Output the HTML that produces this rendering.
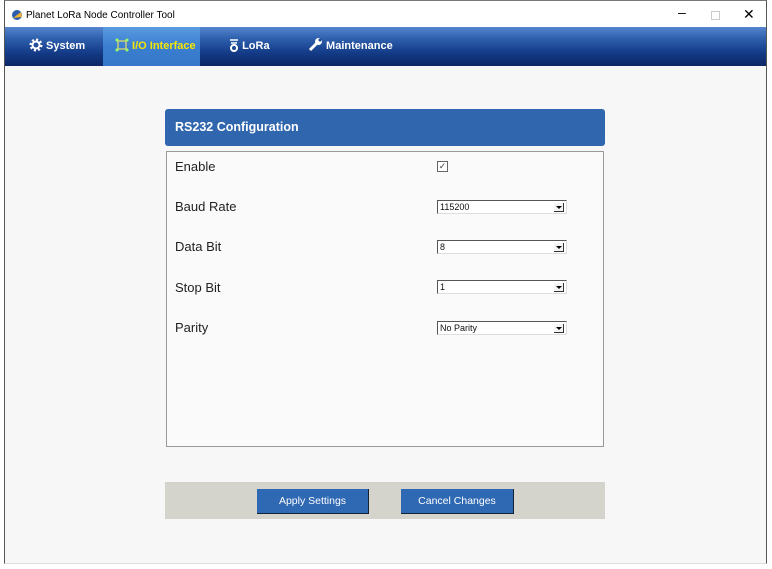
<!DOCTYPE html>
<html><head><style>
body{margin:0;width:772px;height:569px;background:#fff;position:relative;font-family:"Liberation Sans",sans-serif;overflow:hidden}
.win{position:absolute;left:4px;top:0;width:761px;height:562px;border-left:1px solid #555;border-right:1px solid #555;border-top:1px solid #777;border-bottom:1px solid #ddd;background:#f7f7f7}
.title{position:absolute;left:0;top:0;width:761px;height:26px;background:#fff;font-size:11px;color:#000}
.nav{position:absolute;left:0;top:26px;width:761px;height:39px;background:linear-gradient(#5585cc 0%,#2e5fad 30%,#143c88 65%,#0d2766 100%)}
.tab{position:absolute;top:0;height:39px;line-height:39px;color:#fff;font-weight:bold;font-size:11px}
.active{background:linear-gradient(#5a9ae0,#3b7fd0 50%,#3677c8);color:#f5e600}
.abs{position:absolute}
.lbl{position:absolute;left:175px;font-size:13px;color:#222}
.sel{position:absolute;left:437px;width:126px;height:12px;border:1px solid #555;border-right-color:#ddd;border-bottom-color:#ddd;background:#fff;font-size:9px;line-height:12px;color:#111;padding-left:2px;box-sizing:content-box}
.sel:after{content:"";position:absolute;right:2px;top:2px;width:9px;height:8px;border-bottom:1px solid #333;border-right:1px solid #333;background:#f4f4f4}
.sel i{position:absolute;right:4px;top:5px;border-left:3px solid transparent;border-right:3px solid transparent;border-top:3px solid #000;z-index:2}
.btn{position:absolute;top:489px;height:25px;background:#2f68b3;color:#fff;font-size:10.5px;text-align:center;line-height:25px;border-right:1px solid #123;border-bottom:1px solid #123;box-sizing:border-box}
</style></head><body>
<div class="win">
<div class="title">
<svg class="abs" style="left:6px;top:8px" width="12" height="12"><circle cx="6" cy="6" r="5" fill="#2b5fae"/><path d="M2 9 L10 3 L11 8 Z" fill="#f0b030"/></svg>
<span class="abs" style="left:21px;top:9px;font-size:10px">Planet LoRa Node Controller Tool</span>
<span class="abs" style="left:673px;top:3px;font-size:14px">–</span>
<span class="abs" style="left:706px;top:10px;width:7px;height:7px;border:1px solid #ccc"></span>
<span class="abs" style="left:738px;top:5px;font-size:14px">✕</span>
</div>
<div class="nav">
<div class="tab" style="left:24px">
<svg style="vertical-align:-3px" width="14" height="14" viewBox="0 0 14 14"><circle cx="7" cy="7" r="5" fill="none" stroke="#fff" stroke-width="3" stroke-dasharray="2 1.9"/><circle cx="7" cy="7" r="3.5" fill="none" stroke="#fff" stroke-width="2"/></svg> System</div>
<div class="tab active" style="left:98px;width:97px;text-indent:12px">
<svg style="vertical-align:-3px" width="14" height="14"><rect x="3" y="3" width="8" height="8" fill="none" stroke="#e8e060" stroke-width="1.2"/><circle cx="2" cy="2" r="1.5" fill="#9f6"/><circle cx="12" cy="2" r="1.5" fill="#9f6"/><circle cx="2" cy="12" r="1.5" fill="#9f6"/><circle cx="12" cy="12" r="1.5" fill="#9f6"/></svg> I/O Interface</div>
<div class="tab" style="left:224px;font-weight:normal;font-size:11px"><svg style="vertical-align:-3px" width="10" height="14"><path d="M1 2 H9 M2 5 H8" stroke="#fff" stroke-width="1.5"/><circle cx="5" cy="10" r="3" fill="none" stroke="#fff" stroke-width="2"/></svg> <b>LoRa</b></div>
<div class="tab" style="left:303px"><svg style="vertical-align:-3px" width="15" height="15"><path d="M2 13 L9 6" stroke="#fff" stroke-width="3"/><circle cx="10.5" cy="4.5" r="3.5" fill="#fff"/><circle cx="12" cy="3" r="1.5" fill="#1a4590"/></svg> Maintenance</div>
</div>
</div>
<div class="abs" style="left:165px;top:109px;width:440px;height:37px;background:#2f66ae;border-radius:3px;color:#fff;font-weight:bold;font-size:12.5px;line-height:37px;text-indent:10px">RS232 Configuration</div>
<div class="abs" style="left:166px;top:151px;width:436px;height:294px;border:1px solid #999;background:#fafafa"></div>
<div class="lbl" style="top:159px">Enable</div>
<div class="abs" style="left:437px;top:161px;width:9px;height:9px;border:1px solid #666;background:#fff;font-size:9px;line-height:9px;color:#444;text-align:center">✓</div>
<div class="lbl" style="top:199px">Baud Rate</div>
<div class="sel" style="top:200px">115200<i></i></div>
<div class="lbl" style="top:239px">Data Bit</div>
<div class="sel" style="top:240px">8<i></i></div>
<div class="lbl" style="top:280px">Stop Bit</div>
<div class="sel" style="top:280px">1<i></i></div>
<div class="lbl" style="top:320px">Parity</div>
<div class="sel" style="top:321px">No Parity<i></i></div>
<div class="abs" style="left:165px;top:482px;width:440px;height:37px;background:#d4d4cc"></div>
<div class="btn" style="left:257px;width:112px">Apply Settings</div>
<div class="btn" style="left:401px;width:113px">Cancel Changes</div>
</body></html>
